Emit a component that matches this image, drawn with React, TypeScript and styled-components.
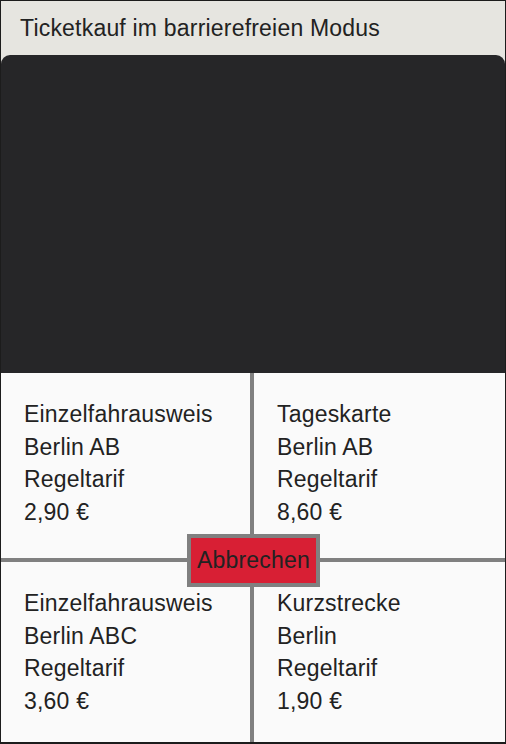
import * as React from 'react';
import styled, { createGlobalStyle } from 'styled-components';

const GlobalStyle = createGlobalStyle`
  html, body {
    margin: 0;
    padding: 0;
    background: #e6e5e0;
  }
  * {
    box-sizing: border-box;
  }
`;

const Screen = styled.div`
  width: 506px;
  height: 744px;
  display: flex;
  flex-direction: column;
  background: #e6e5e0;
  border: 1px solid #1c1c1c;
  border-bottom-width: 2px;
  font-family: 'Liberation Sans', Arial, sans-serif;
  color: #222;
`;

const Header = styled.div`
  height: 54px;
  padding: 1px 0 0 19px;
  display: flex;
  align-items: center;
  font-size: 23px;
  letter-spacing: 0.2px;
  flex-shrink: 0;
`;

const Display = styled.div`
  height: 318px;
  flex-shrink: 0;
  background: #262628;
  border-radius: 9px 9px 0 0;
`;

const Tickets = styled.div`
  position: relative;
  flex: 1;
  display: grid;
  grid-template-columns: 249px 1fr;
  grid-template-rows: 185px 1fr;
  gap: 4px;
  background: #808080;
`;

const Cell = styled.button`
  background: #fafafa;
  border: none;
  padding: 25px 0 0 23px;
  margin: 0;
  text-align: left;
  display: flex;
  flex-direction: column;
  align-items: flex-start;
  justify-content: flex-start;
  font-family: inherit;
  font-size: 23px;
  letter-spacing: 0.2px;
  line-height: 32.7px;
  color: #222;
  cursor: pointer;
`;

const Cancel = styled.button`
  position: absolute;
  left: 186px;
  top: 161px;
  width: 133px;
  height: 53px;
  background: #d81f34;
  border: 4px solid #808080;
  font-family: inherit;
  font-size: 23px;
  letter-spacing: 0.2px;
  color: #222;
  padding: 0;
  cursor: pointer;
`;

interface ITicket {
  name: string;
  zone: string;
  tariff: string;
  price: string;
}

const tickets: ITicket[] = [
  { name: 'Einzelfahrausweis', zone: 'Berlin AB', tariff: 'Regeltarif', price: '2,90 €' },
  { name: 'Tageskarte', zone: 'Berlin AB', tariff: 'Regeltarif', price: '8,60 €' },
  { name: 'Einzelfahrausweis', zone: 'Berlin ABC', tariff: 'Regeltarif', price: '3,60 €' },
  { name: 'Kurzstrecke', zone: 'Berlin', tariff: 'Regeltarif', price: '1,90 €' },
];

export default function App() {
  return (
    <>
      <GlobalStyle />
      <Screen>
        <Header>Ticketkauf im barrierefreien Modus</Header>
        <Display />
        <Tickets>
          {tickets.map((t, i) => (
            <Cell key={i}>
              <span>{t.name}</span>
              <span>{t.zone}</span>
              <span>{t.tariff}</span>
              <span>{t.price}</span>
            </Cell>
          ))}
          <Cancel>Abbrechen</Cancel>
        </Tickets>
      </Screen>
    </>
  );
}
